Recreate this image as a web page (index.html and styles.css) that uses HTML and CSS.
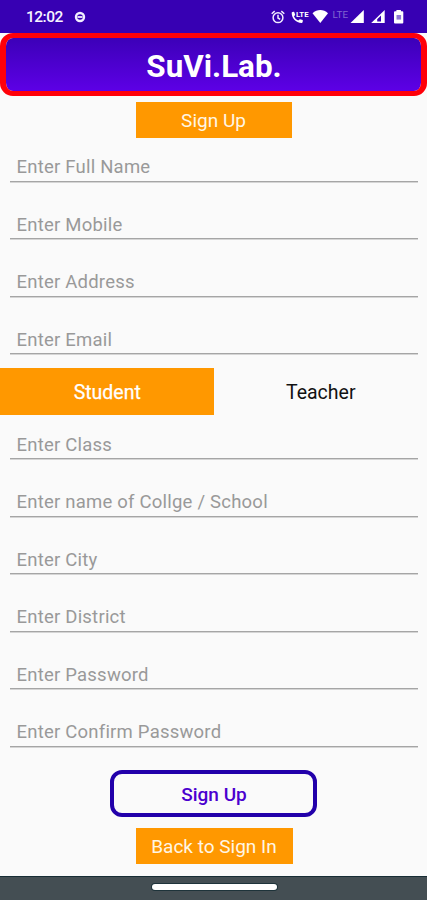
FILE: index.html
```html
<!DOCTYPE html>
<html lang="en">
<head>
<meta charset="utf-8">
<title>SuVi.Lab. Sign Up</title>
<link rel="stylesheet" href="styles.css">
</head>
<body>
<div class="screen">
  <header class="status">
    <span class="time">12:02</span>
    <svg class="dnd" width="12" height="12" viewBox="0 0 12 12"><circle cx="6" cy="6" r="4" fill="none" stroke="#f1edff" stroke-width="2.4"/><path d="M3.5 6h5" stroke="#f1edff" stroke-width="1.8"/></svg>
    <svg class="icons" width="136" height="18" viewBox="270 8 136 18" fill="#fff">
      <g fill="none" stroke="#f1edff" stroke-width="1.5"><circle cx="278" cy="17.7" r="4.9"/><path d="M278 14.8v3.2l2.2 1.3M271.7 13.7l3-2.6M284.3 13.7l-3-2.6"/></g>
      <path d="M291.7 12.500q.8-.8 2.500-.6l1 2.800-1.200 1.800c1 2 2.300 3.200 4.200 4.100l1.700-1.400 2.900.9q.2 1.900-.7 2.800c-6.200.2-10.600-4.600-10.400-10.400z"/>
      <text class="lte-small" x="296" y="16.6" textLength="12.5" lengthAdjust="spacingAndGlyphs">LTE</text>
      <path d="M312.5 13.300c4.600-4.300 11-4.300 15.500 0L320.300 23z"/>
      <text class="lte" x="332.500" y="17.500" textLength="15.500" lengthAdjust="spacingAndGlyphs">LTE</text>
      <path d="M363.800 10v13H350.500z"/>
      <path d="M384.700 10v13H371.200z"/><path d="M381 15.500v6h-3.800v-2.200z" fill="#3700b3"/>
      <path d="M396.400 11.200V10h4.500v1.200h1.400q1 0 1 1v10.300q0 1-1 1h-7.300q-1 0-1-1V12.200q0-1 1-1z"/><path d="M396.500 15h4.600v4.600h-4.600z" fill="#8f78d5"/>
    </svg>
  </header>
  <div class="banner"><h1>SuVi.Lab.</h1></div>
  <div class="tag tag-top">Sign Up</div>
  <div class="fields first">
    <div class="field">Enter Full Name</div>
    <div class="field">Enter Mobile</div>
    <div class="field">Enter Address</div>
    <div class="field">Enter Email</div>
  </div>
  <div class="tabs"><div class="tab active">Student</div><div class="tab">Teacher</div></div>
  <div class="fields second">
    <div class="field">Enter Class</div>
    <div class="field">Enter name of Collge / School</div>
    <div class="field">Enter City</div>
    <div class="field">Enter District</div>
    <div class="field">Enter Password</div>
    <div class="field">Enter Confirm Password</div>
  </div>
  <div class="submit">Sign Up</div>
  <div class="tag tag-back">Back to Sign In</div>
  <footer class="nav"><div class="pill"></div></footer>
</div>
</body>
</html>
```
FILE: styles.css
```css
* { box-sizing: border-box; }
body { margin: 0; background: #fafafa; font-family: Roboto, sans-serif; }
.screen { width: 427px; height: 900px; display: flex; flex-direction: column; align-items: center; overflow: hidden; }
.status { width: 100%; height: 33px; flex: none; display: flex; align-items: center; padding: 1px 21px 0 26px; background: #3700b3; color: #f7f4ff; }
.time { font-size: 15.5px; font-weight: 500; letter-spacing: -.5px; width: 48px; }
.icons { margin-left: auto; }
.lte-small { font-size: 8px; font-weight: 700; }
.lte { font-size: 9.5px; fill: #8067d0; }
.banner { width: 100%; height: 63px; flex: none; border: solid #ff0009; border-width: 5px 6px; border-radius: 13px; background: linear-gradient(#3c00b8, #5d00e6) padding-box; display: flex; align-items: center; justify-content: center; }
.banner h1 { margin: 4px 0 0 1px; color: #fff; font-size: 31.4px; line-height: 38px; font-weight: 700; }
.tag { flex: none; background: #ff9800; color: #fff6e5; font-size: 19px; display: flex; align-items: center; justify-content: center; height: 36px; padding-top: 1px; }
.tag-top { width: 156px; margin-top: 6px; }
.fields { width: 408px; flex: none; margin-left: 1px; }
.first { margin-top: -14px; }
.second { margin-top: -13.5px; }
.field { height: 57.5px; padding: 31px 0 0 6.5px; border-bottom: 1px solid #a5a5a5; box-shadow: 0 1px #d5d5d5; color: #999; font-size: 18.5px; line-height: 24px; letter-spacing: .22px; white-space: nowrap; }
.tabs { width: 100%; height: 47px; flex: none; margin-top: 14px; display: flex; }
.tab { flex: 1; display: flex; align-items: center; justify-content: center; padding: 2px 0 0 1px; font-size: 19.5px; color: #111; }
.tab.active { background: #ff9800; color: #fff; -webkit-text-stroke: .25px #fff; }
.submit { width: 207px; height: 47px; flex: none; margin-top: 23.5px; padding: 1px 0 0 1px; border: 4px solid #2200aa; border-radius: 12px; display: flex; align-items: center; justify-content: center; color: #4b00cf; font-size: 19px; font-weight: 500; }
.tag-back { width: 157px; margin-top: 11px; margin-left: 1px; }
.nav { width: 100%; height: 24px; flex: none; margin-top: auto; border-top: 1px solid #172d35; background: #444e53; display: flex; justify-content: center; padding-top: 7px; }
.pill { width: 125px; height: 6px; margin-left: 1px; border-radius: 3px; background: #fff; box-shadow: 0 0 0 1px #1e333a; }
```
